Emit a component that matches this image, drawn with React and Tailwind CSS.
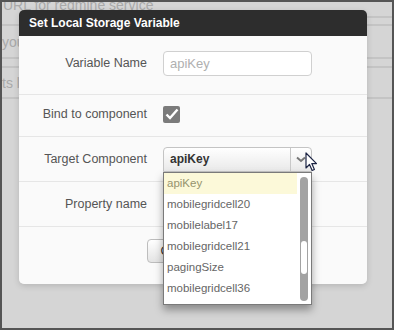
import React from "react";

const items = [
  "apiKey",
  "mobilegridcell20",
  "mobilelabel17",
  "mobilegridcell21",
  "pagingSize",
  "mobilegridcell36",
  "mobilelabel37",
];

function Row({ label, children, className }) {
  return (
    <div className={`flex items-center border-b border-[#e6e6e6] ${className}`}>
      <div className="w-[128px] shrink-0 text-right text-[12.5px] text-[#555]">{label}</div>
      <div className="ml-[16px] w-[149px]">{children}</div>
    </div>
  );
}

export default function App() {
  return (
    <div
      className="relative w-[394px] h-[330px] overflow-hidden border-2 border-[#555] bg-[#d5d5d5]"
      style={{ fontFamily: '"Liberation Sans", Arial, sans-serif' }}
    >
      {/* faded page behind the dialog */}
      <div className="flex flex-col text-[14px] text-[#a9a9a9]">
        <div className="-mt-[5px] h-[19px] pl-[1px] leading-[16px]">URL for redmine service</div>
        <div className="ml-auto h-[2px] w-[30px] bg-[#c4c4c4]" />
        <div className="mt-[6px] h-[2px] bg-[#c4c4c4]" />
        <div className="h-[31px] pt-[8px] leading-[16px]">your</div>
        <div className="h-[2px] bg-[#c4c4c4]" />
        <div className="h-[7px]" />
        <div className="h-[2px] bg-[#c4c4c4]" />
        <div className="h-[29px] pt-[7px] leading-[16px]">ts l</div>
        <div className="h-[2px] bg-[#c4c4c4]" />
      </div>

      {/* dialog */}
      <div className="absolute left-[17px] top-[8px] w-[348px] rounded-[5px] shadow-[0_2px_6px_rgba(0,0,0,0.15)]">
        <div className="flex h-[26px] items-center rounded-t-[5px] bg-[#2d2d2d] pl-[10px] text-[12px] font-bold text-white">
          Set Local Storage Variable
        </div>
        <div className="rounded-b-[5px] bg-[#fafafa]">
          <Row label="Variable Name" className="pt-[15px] pb-[18px]">
            <div className="flex h-[25px] items-center rounded-[4px] border border-[#d0d0d0] bg-white pl-[6px] text-[13px] text-[#b0b0b0]">
              apiKey
            </div>
          </Row>
          <Row label="Bind to component" className="pt-[10px] pb-[12px]">
            <div className="flex h-[17px] w-[17px] items-center justify-center rounded-[2px] bg-[#7b7b7b]">
              <svg width="14" height="12" viewBox="0 0 14 12">
                <path d="M1.5 6.5 L5 10 L12.5 1.5" fill="none" stroke="#fff" strokeWidth="2.4" />
              </svg>
            </div>
          </Row>
          <Row label="Target Component" className="pt-[10px] pb-[9px]">
            <div className="flex h-[25px] items-stretch rounded-t-[4px] border border-[#c4c4c4] bg-gradient-to-b from-white to-[#e9e9e9]">
              <div className="flex flex-1 items-center pl-[6px] text-[12px] font-bold text-[#333]">apiKey</div>
              <div className="flex w-[21px] items-center justify-center border-l border-[#c8c8c8]">
                <svg width="10" height="7" viewBox="0 0 10 7">
                  <path d="M1 1.5 L5 5 L9 1.5" fill="none" stroke="#777" strokeWidth="2" />
                </svg>
              </div>
            </div>
          </Row>
          <Row label="Property name" className="pt-[10px] pb-[9px]">
            <div className="h-[25px]" />
          </Row>
          <div className="pt-[11px] pb-[21px] pl-[128px]">
            <button className="h-[24px] w-[46px] rounded-[4px] border border-[#bdbdbd] bg-gradient-to-b from-white to-[#e4e4e4] text-[13px] text-[#333]">
              OK
            </button>
          </div>
        </div>
      </div>

      {/* open select list */}
      <div className="absolute left-[161px] top-[170px] flex h-[133px] w-[149px] overflow-hidden border border-[#7a7a7a] bg-white shadow-[0_5px_8px_rgba(0,0,0,0.35)]">
        <div className="flex-1">
          {items.map((it, i) => (
            <div
              key={it}
              className={`flex h-[21px] items-center pl-[3px] text-[11.5px] ${
                i === 0 ? "bg-[#fcf9d9] text-[#96946e]" : "text-[#666]"
              }`}
            >
              {it}
            </div>
          ))}
        </div>
        <div className="flex w-[14px] justify-center pt-[4px] pb-[3px]">
          <div className="flex w-[8px] flex-col rounded-[4px] bg-[#a3a3a3] pt-[64px]">
            <div className="mx-auto h-[33px] w-[6px] rounded-[3px] bg-white" />
          </div>
        </div>
      </div>

      {/* mouse pointer */}
      <svg className="absolute left-[303px] top-[150px]" width="13" height="20" viewBox="0 0 13 20">
        <path
          d="M1 1 L1 16 L4.5 12.5 L7.2 18.5 L9.4 17.5 L6.8 11.6 L11.5 11.6 Z"
          fill="#fff"
          stroke="#1c2444"
          strokeWidth="1.2"
          strokeLinejoin="round"
        />
      </svg>
    </div>
  );
}
